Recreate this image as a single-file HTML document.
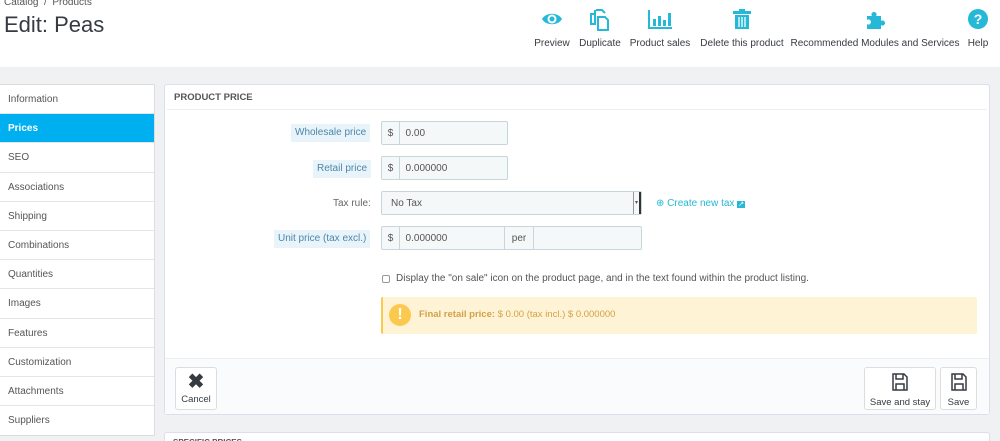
<!DOCTYPE html><html><head><style>
*{box-sizing:border-box;margin:0;padding:0}
html,body{width:1000px;height:441px;overflow:hidden}
body{background:#eff1f2;font-family:"Liberation Sans",sans-serif;font-size:10px;color:#555;position:relative}
.hdr{position:absolute;left:0;top:0;width:1000px;height:67px;background:#fff}
.bc{position:absolute;left:4px;top:-3px;font-size:10px;color:#555}
h1{position:absolute;left:4px;top:12px;font-size:22px;font-weight:normal;color:#363a41}
.tb{position:absolute;top:8px;width:0;font-size:10px;color:#363a41}
.tb div{position:absolute;left:-100px;width:200px;text-align:center;white-space:nowrap}
.tb svg{position:absolute;top:0}
.tb .t{top:30px}
.side{position:absolute;left:0;top:84px;width:155px;background:#fff;border:1px solid #ddd;border-left:none}
.side div{height:29.2px;line-height:29px;padding-left:8px;border-bottom:1px solid #e5e5e5;font-size:10px;color:#555}
.side .act{background:#00aff0;color:#fff;font-weight:bold}
.panel{position:absolute;left:164px;top:84px;width:826px;height:331px;background:#fff;border:1px solid #dde;border-radius:3px}
.ph{height:25px;line-height:25px;padding-left:7px;font-size:9.5px;font-weight:bold;color:#555;border-bottom:1px solid #eee;margin:0 2px}
.lbl{position:absolute;font-size:10px;color:#666;height:18px;line-height:18px;padding:0 4px;white-space:nowrap}
.lbl.b{background:#e8f4fa;color:#4d86ab}
.inp{position:absolute;height:24px;background:#f5f8f9;border:1px solid #c7d6db;border-radius:2px;font-size:10px;color:#555;display:flex;align-items:center}
.inp span{display:flex;align-items:center;justify-content:center;border-right:1px solid #c7d6db;height:22px}
.foot{position:absolute;left:0;bottom:0;width:824px;height:56px;background:#fafbfc;border-top:1px solid #eee}
.btn{position:absolute;top:8px;height:43px;background:#fff;border:1px solid #ddd;border-radius:3px;text-align:center;font-size:9.5px;color:#363a41;padding-top:5px;white-space:nowrap}
</style></head><body>
<div class="hdr">
<div class="bc">Catalog &nbsp;/&nbsp; Products</div>
<h1>Edit: Peas</h1>
<div class="tb" style="left:552px"><svg style="left:-11px" width="22" height="22" viewBox="0 0 22 22"><path d="M1 11C5 4 17 4 21 11C17 18 5 18 1 11Z" fill="#25b9d7"/><circle cx="11" cy="11" r="4.5" fill="#fff"/><circle cx="11" cy="11" r="2.5" fill="#25b9d7"/></svg><div class="t">Preview</div></div>
<div class="tb" style="left:600px"><svg style="left:-11px" width="22" height="24" viewBox="0 0 22 24" fill="none" stroke="#25b9d7" stroke-width="2"><path d="M2 6h4v10H2z M7 2h6l3 3 M9 9h7l3 3v10H9z"/><path d="M6 2v4"/></svg><div class="t">Duplicate</div></div>
<div class="tb" style="left:660px"><svg style="left:-13px" width="26" height="22" viewBox="0 0 26 22"><path d="M2 2v18h23" stroke="#25b9d7" stroke-width="2" fill="none"/><rect x="6" y="11" width="3" height="7" fill="#25b9d7"/><rect x="11" y="8" width="3" height="10" fill="#25b9d7"/><rect x="16" y="12" width="3" height="6" fill="#25b9d7"/><rect x="21" y="5" width="3" height="13" fill="#25b9d7"/></svg><div class="t">Product sales</div></div>
<div class="tb" style="left:742px"><svg style="left:-10px" width="20" height="22" viewBox="0 0 20 22"><rect x="1" y="3" width="18" height="3" fill="#25b9d7"/><rect x="7" y="1" width="6" height="3" fill="#25b9d7"/><path d="M3 7h14v14H3z" fill="#25b9d7"/><path d="M7 9v10M10 9v10M13 9v10" stroke="#fff" stroke-width="1.3"/></svg><div class="t">Delete this product</div></div>
<div class="tb" style="left:875px"><svg style="left:-11px" width="22" height="22" viewBox="0 0 22 22"><path d="M3 8h5a2.5 2.5 0 1 1 4 0h5v5a2.5 2.5 0 1 1 0 4v4H3v-5a2.5 2.5 0 1 0 0-4z" fill="#25b9d7"/></svg><div class="t">Recommended Modules and Services</div></div>
<div class="tb" style="left:978px"><svg style="left:-11px" width="22" height="22" viewBox="0 0 22 22"><circle cx="11" cy="11" r="10" fill="#25b9d7"/><text x="11" y="16" text-anchor="middle" font-size="14" font-weight="bold" fill="#fff" font-family="Liberation Sans">?</text></svg><div class="t">Help</div></div>
</div>
<div class="side">
<div>Information</div><div class="act">Prices</div><div>SEO</div><div>Associations</div><div>Shipping</div><div>Combinations</div><div>Quantities</div><div>Images</div><div>Features</div><div>Customization</div><div>Attachments</div><div style="border:none">Suppliers</div>
</div>
<div class="panel">
<div class="ph">PRODUCT PRICE</div>
<div class="lbl b" style="left:126px;top:39px">Wholesale price</div>
<div class="inp" style="left:216px;top:36px;width:127px"><span style="width:18px">$</span>&nbsp;&nbsp;0.00</div>
<div class="lbl b" style="left:148px;top:75px">Retail price</div>
<div class="inp" style="left:216px;top:71px;width:127px"><span style="width:18px">$</span>&nbsp;&nbsp;0.000000</div>
<div class="lbl" style="left:164px;top:110px">Tax rule:</div>
<div class="inp" style="left:216px;top:106px;width:261px;padding-left:9px">No Tax<div style="position:absolute;right:0;top:0;width:8px;height:22px;border-left:1px solid #999;border-right:2px solid #333;font-size:6px;line-height:22px;text-align:center">▾</div></div>
<div style="position:absolute;left:491px;top:113px;font-size:10px;color:#25b9d7">⊕ Create new tax <span style="background:#25b9d7;color:#fff;font-size:7px;padding:0 1px">↗</span></div>
<div class="lbl b" style="left:109px;top:145px">Unit price (tax excl.)</div>
<div class="inp" style="left:216px;top:141px;width:261px"><span style="width:18px">$</span>&nbsp;&nbsp;0.000000<span style="position:absolute;left:122px;top:0;width:30px;border-left:1px solid #c7d6db">per</span></div>
<div style="position:absolute;left:217px;top:190px;width:8px;height:8px;border:1px solid #999;border-radius:2px"></div>
<div style="position:absolute;left:231px;top:188px;font-size:10px;color:#555;white-space:nowrap">Display the "on sale" icon on the product page, and in the text found within the product listing.</div>
<div style="position:absolute;left:216px;top:212px;width:596px;height:37px;background:#fff3d6;border-left:2px solid #fcc94f;border-radius:2px">
<div style="position:absolute;left:6px;top:7px;width:22px;height:22px;border-radius:50%;background:#fcc94f;color:#fff;font-weight:bold;font-size:16px;text-align:center;line-height:22px">!</div>
<div style="position:absolute;left:36px;top:12px;font-size:9.5px;color:#d4a046;white-space:nowrap"><b>Final retail price:</b> $ 0.00 (tax incl.) $ 0.000000</div></div>
<div class="foot">
<div class="btn" style="left:10px;width:42px"><div style="font-size:20px;font-weight:bold;line-height:18px">✖</div><div style="margin-top:3px">Cancel</div></div>
<div class="btn" style="left:699px;width:72px"><svg width="16" height="18" viewBox="0 0 16 18" fill="none" stroke="#363a41" stroke-width="1.5"><path d="M1 1h11l3 3v13H1z M4 1v5h7V1 M4 17v-6h8v6"/></svg><div style="margin-top:3px">Save and stay</div></div>
<div class="btn" style="left:775px;width:37px"><svg width="16" height="18" viewBox="0 0 16 18" fill="none" stroke="#363a41" stroke-width="1.5"><path d="M1 1h11l3 3v13H1z M4 1v5h7V1 M4 17v-6h8v6"/></svg><div style="margin-top:3px">Save</div></div>
</div>
</div>
<div style="position:absolute;left:164px;top:432px;width:826px;height:20px;background:#fff;border:1px solid #dde;border-radius:3px;font-size:8px;font-weight:bold;padding:5px 8px;color:#555">SPECIFIC PRICES</div>
</body></html>
